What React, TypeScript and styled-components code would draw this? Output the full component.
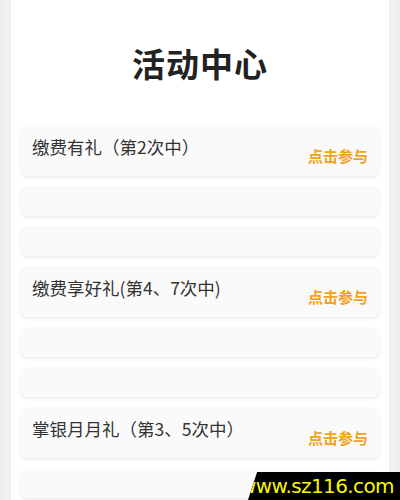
import React from "react";
import styled, { createGlobalStyle } from "styled-components";

const Global = createGlobalStyle`
  html, body { margin: 0; padding: 0; background: #f1f1f1; }
  body { font-family: "Noto Sans CJK SC", "Noto Sans", sans-serif; overflow: hidden; }
  * { box-sizing: border-box; }
`;

const Page = styled.div`
  width: 400px;
  height: 500px;
  overflow: hidden;
  position: relative;
  padding: 0 11px;
  background: linear-gradient(90deg, #ececec 0, #f4f4f4 11px, #f4f4f4 389px, #ececec 400px);
`;

const Panel = styled.div`
  background: #ffffff;
  min-height: 600px;
  padding: 0 9px;
  box-shadow: 0 0 4px rgba(0, 0, 0, 0.04);
`;

const Title = styled.h1`
  margin: 0;
  padding: 44px 0 43px;
  text-align: center;
  font-size: 33px;
  line-height: 38px;
  font-weight: 700;
  color: #222;
  letter-spacing: 1px;
`;

const List = styled.div`
  display: flex;
  flex-direction: column;
  gap: 10px;
`;

const Card = styled.div<{ $tall?: boolean }>`
  height: ${(p) => (p.$tall ? 51 : 30)}px;
  background: #fafafa;
  border-radius: 8px;
  box-shadow: 0 2px 3px rgba(0, 0, 0, 0.07);
  display: flex;
  justify-content: space-between;
  align-items: flex-start;
  padding: 11px 12px 0 12px;
`;

const Name = styled.span`
  font-size: 17.5px;
  line-height: 22px;
  color: #333;
`;

const Action = styled.span`
  margin-top: 10px;
  font-size: 15px;
  line-height: 20px;
  font-weight: 700;
  color: #f2a21c;
`;

const Watermark = styled.div`
  position: absolute;
  right: 0;
  bottom: 0;
  width: 152px;
  height: 28px;
  background: #000;
  clip-path: polygon(6% 0, 100% 0, 100% 100%, 0 100%);
  border-top-left-radius: 6px;
  display: flex;
  align-items: center;
  justify-content: flex-end;
  padding-right: 6px;
`;

const WmText = styled.span`
  font-family: "DejaVu Sans", sans-serif;
  font-size: 20px;
  line-height: 28px;
  color: #f7f700;
  letter-spacing: -0.6px;
`;

const items = [
  { name: "缴费有礼（第2次中）" },
  { name: "缴费享好礼(第4、7次中)" },
  { name: "掌银月月礼（第3、5次中）" },
];

export default function App() {
  return (
    <Page>
      <Global />
      <Panel>
        <Title>活动中心</Title>
        <List>
          {items.map((it) => (
            <React.Fragment key={it.name}>
              <Card $tall>
                <Name>{it.name}</Name>
                <Action>点击参与</Action>
              </Card>
              <Card />
              <Card />
            </React.Fragment>
          ))}
        </List>
      </Panel>
      <Watermark>
        <WmText>www.sz116.com</WmText>
      </Watermark>
    </Page>
  );
}
